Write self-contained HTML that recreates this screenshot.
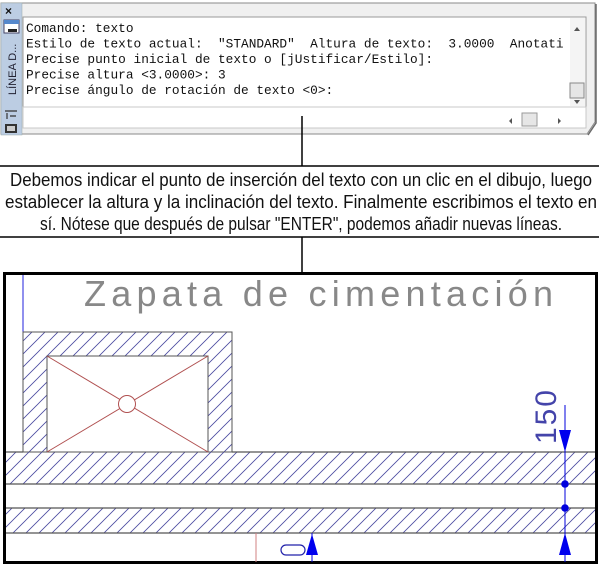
<!DOCTYPE html>
<html><head><meta charset="utf-8"><style>
html,body{margin:0;padding:0;background:#fff;}
svg{display:block;}
</style></head><body>
<svg width="602" height="569" viewBox="0 0 602 569" xmlns="http://www.w3.org/2000/svg">
<defs>
<pattern id="h" width="13" height="13" patternUnits="userSpaceOnUse">
<path d="M0 13 L13 0 M-1 1 L1 -1 M12 14 L14 12" stroke="#4a4aa0" stroke-width="0.8" fill="none"/>
</pattern>
</defs>
<rect width="602" height="569" fill="#fff"/>
<path d="M1 3 H595 V122 L587 134 H1 Z" fill="#f0f0f0" stroke="#8a8a8a"/>
<path d="M596 4 V123 L588 135" stroke="#6a6a6a" fill="none" stroke-width="1.5"/>
<rect x="1" y="3" width="21" height="132" fill="#bccde3" stroke="#9aa" stroke-width="0.5"/>
<text x="5" y="15" font-family="Liberation Sans,sans-serif" font-weight="bold" font-size="12" fill="#111">×</text>
<rect x="4" y="20" width="15" height="13" fill="#fff" stroke="#446"/>
<rect x="4" y="20" width="15" height="4" fill="#5588cc"/>
<rect x="8" y="29" width="9" height="3" fill="#222"/>
<text transform="translate(16,95) rotate(-90)" font-family="Liberation Sans,sans-serif" font-size="11" fill="#223">LÍNEA D...</text>
<path d="M5 111 H17 M7 113 V119 M10 116 H16" stroke="#333" stroke-width="1.2"/>
<rect x="5" y="124" width="12" height="9" fill="#333"/>
<rect x="7" y="126" width="8" height="5" fill="#ccc"/>
<rect x="23" y="17" width="563" height="90" fill="#fff" stroke="#9a9a9a"/>
<rect x="23" y="107" width="563" height="21" fill="#fff" stroke="#c8c8c8"/>
<g font-family="Liberation Mono,monospace" font-size="12.8" fill="#111">
<text x="26" y="32">Comando: texto</text>
<text x="26" y="47.5">Estilo de texto actual:&#160; "STANDARD"&#160; Altura de texto:&#160; 3.0000&#160; Anotati</text>
<text x="26" y="63">Precise punto inicial de texto o [jUstificar/Estilo]:</text>
<text x="26" y="78.5">Precise altura &lt;3.0000&gt;: 3</text>
<text x="26" y="94">Precise ángulo de rotación de texto &lt;0&gt;:</text>
</g>
<rect x="570" y="18" width="15" height="88" fill="#f4f4f4"/>
<path d="M574 31 L577 27 L580 31Z" fill="#555"/>
<rect x="570" y="83" width="14" height="15" fill="#e6e6e6" stroke="#888"/>
<path d="M574 100 L577 104 L580 100Z" fill="#555"/>
<path d="M512 118 L509 121 L512 124Z" fill="#555"/>
<rect x="522" y="113" width="15" height="13" fill="#e6e6e6" stroke="#999"/>
<path d="M558 118 L561 121 L558 124Z" fill="#555"/>
<line x1="302" y1="116" x2="302" y2="166" stroke="#000" stroke-width="1.5"/>
<line x1="0" y1="166" x2="599" y2="166" stroke="#000" stroke-width="1.5"/>
<line x1="0" y1="237" x2="599" y2="237" stroke="#000" stroke-width="1.5"/>
<line x1="302" y1="237" x2="302" y2="285" stroke="#000" stroke-width="1.5"/>
<g font-family="Liberation Sans,sans-serif" font-size="18" fill="#111">
<text x="10" y="186" textLength="582" lengthAdjust="spacingAndGlyphs">Debemos indicar el punto de inserción del texto con un clic en el dibujo, luego</text>
<text x="5" y="208" textLength="592" lengthAdjust="spacingAndGlyphs">establecer la altura y la inclinación del texto. Finalmente escribimos el texto en</text>
<text x="40" y="230" textLength="522" lengthAdjust="spacingAndGlyphs">sí. Nótese que después de pulsar "ENTER", podemos añadir nuevas líneas.</text>
</g>
<rect x="4.5" y="273.5" width="592" height="289" fill="#fff" stroke="#000" stroke-width="3"/>
<line x1="23" y1="275" x2="23" y2="452" stroke="#2222dd" stroke-width="1"/>
<text x="84" y="306" font-family="Liberation Sans,sans-serif" font-size="36" fill="#888" textLength="469" lengthAdjust="spacing">Zapata de cimentación</text>
<path d="M23 332 H232 V452 H208 V356 H47 V452 H23Z" fill="url(#h)" stroke="#555"/>
<rect x="6" y="452" width="589" height="32" fill="url(#h)"/>
<rect x="6" y="508" width="589" height="25" fill="url(#h)"/>
<path d="M6 452 H23 M232 452 H595 M6 484 H595 M6 508 H595 M6 533 H595" stroke="#555" stroke-width="1.2"/>
<rect x="47" y="356" width="161" height="96" fill="#fff" stroke="#555"/>
<path d="M47 356 L208 452 M208 356 L47 452" stroke="#b05050" stroke-width="1"/>
<circle cx="127" cy="404" r="8.5" fill="#fff" stroke="#b05050"/>
<line x1="256" y1="533" x2="256" y2="562" stroke="#d08080" stroke-width="1"/>
<rect x="281" y="545" width="24" height="10" rx="5" fill="none" stroke="#2222aa" stroke-width="1.2"/>
<line x1="312" y1="533" x2="312" y2="562" stroke="#0000dd"/>
<path d="M312 534 L306 555 H318Z" fill="#0000ee"/>
<line x1="565" y1="405" x2="565" y2="562" stroke="#0000dd"/>
<path d="M565 452 L559 430 H571Z" fill="#0000ee"/>
<path d="M565 533 L559 555 H571Z" fill="#0000ee"/>
<circle cx="565" cy="484" r="3.8" fill="#0000dd"/>
<circle cx="565" cy="508" r="3.8" fill="#0000dd"/>
<text transform="translate(556,444) rotate(-90)" font-family="Liberation Sans,sans-serif" font-size="30" fill="#4444aa" textLength="54" lengthAdjust="spacing">150</text>
</svg>
</body></html>
